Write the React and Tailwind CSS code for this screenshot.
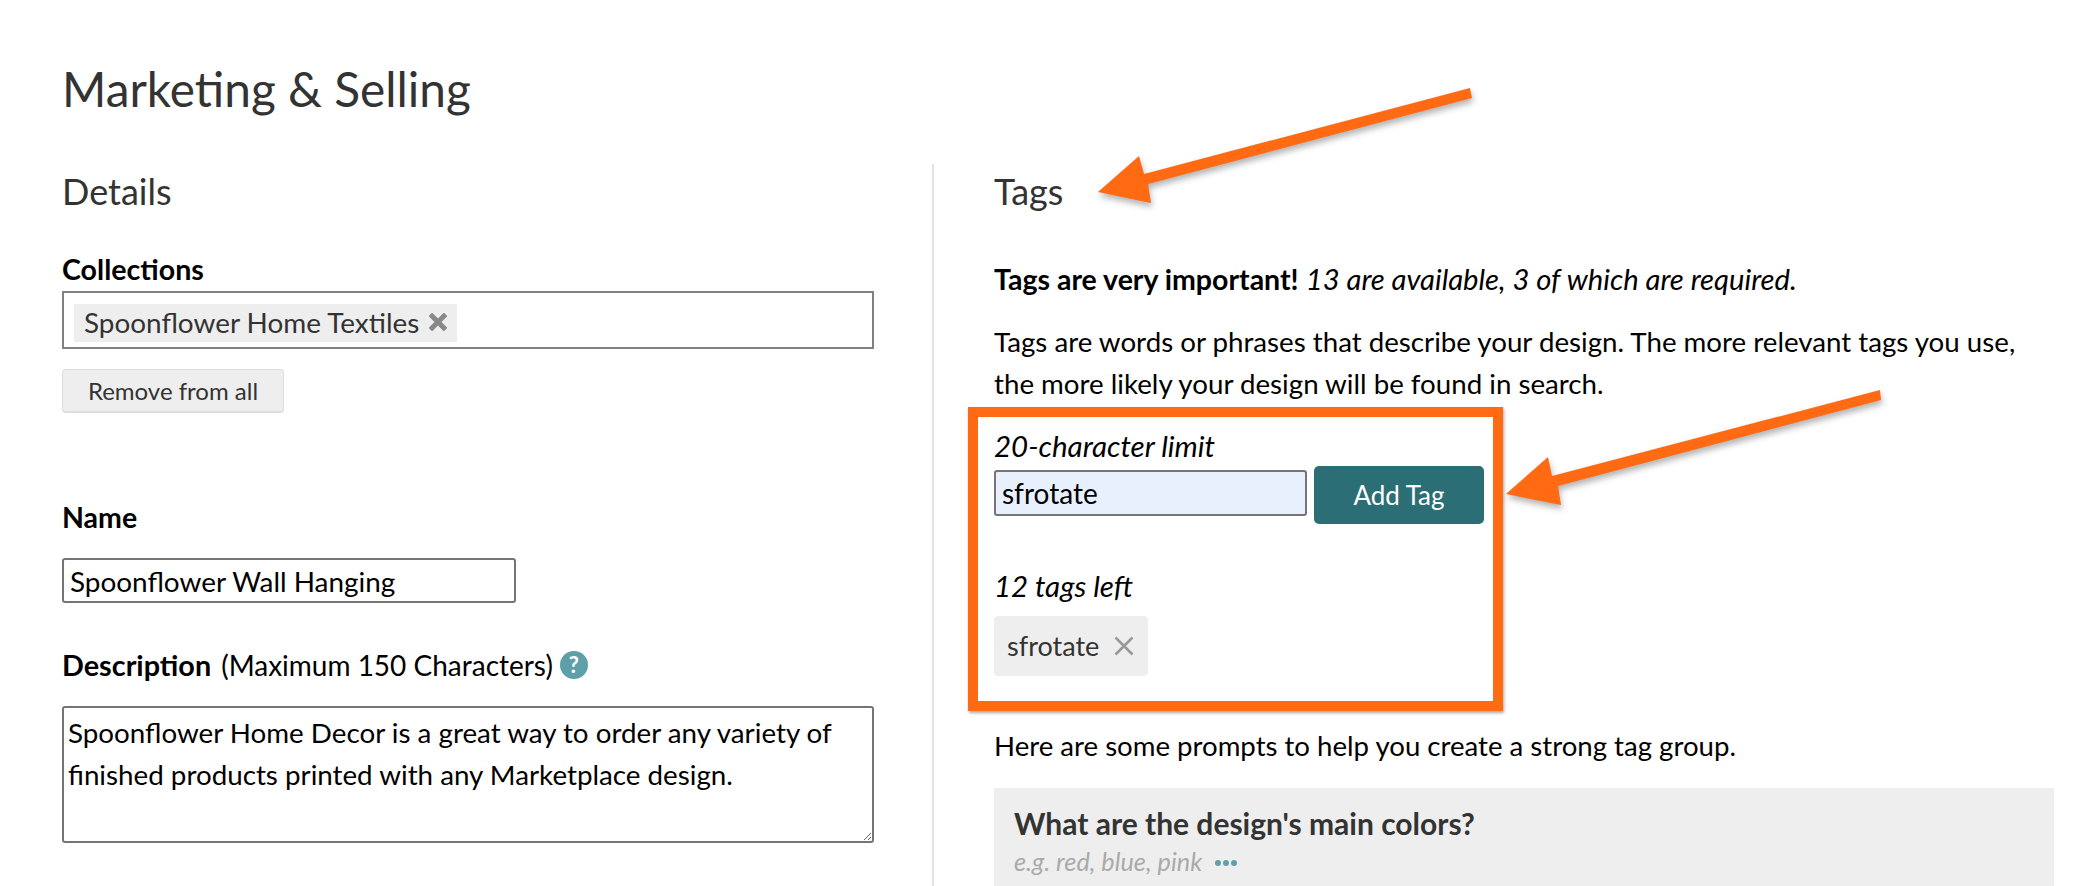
import React from "react";

function CloseIcon({ size, strokeWidth, className }) {
  return (
    <svg className={className} width={size} height={size} viewBox="0 0 20 20" fill="none" stroke="currentColor" strokeWidth={strokeWidth}>
      <path d="M1.5 1.5 18.5 18.5M18.5 1.5 1.5 18.5" />
    </svg>
  );
}

function Arrows() {
  return (
    <svg className="absolute left-0 top-0 pointer-events-none drop-shadow-[1px_4px_3px_rgba(0,0,0,0.3)]" width="2098" height="886">
      <polygon fill="#ff6a13" points="1470,88 1472,98 1148,184 1151,203 1098,192 1139,156 1144,174" />
      <polygon fill="#ff6a13" points="1880,390 1881,400 1558,486 1561,505 1506,494 1548,457 1552,476" />
    </svg>
  );
}

export default function App() {
  return (
    <div className="relative w-[2098px] h-[886px] overflow-hidden bg-white font-['Lato','Open_Sans',sans-serif] text-black text-[28px] leading-[42px]">
      <h1 className="pl-[62px] pt-[60px] h-[164px] text-[47.8px] leading-[58px] text-[#333333]">Marketing &amp; Selling</h1>

      <div className="flex h-[722px]">
        <div className="w-[934px] pl-[62px] pr-[58px] border-r-2 border-[#e3e3e3]">
          <h2 className="text-[36px] leading-[54px] text-[#333333]">Details</h2>
          <label className="block mt-[35px] font-bold leading-[32px] text-[28.6px]">Collections</label>
          <div className="mt-[6px] h-[58px] border-2 border-[#808080] p-[8px_10px]">
            <span className="inline-flex items-center h-[38px] pl-[10px] pr-[10px] pb-[2px] bg-[#eeeeee] text-[#333333] text-[27.9px] gap-[10px]">
              Spoonflower Home Textiles
              <CloseIcon size={18} strokeWidth={5.5} className="text-[#888888]" />
            </span>
          </div>
          <button className="block mt-[20px] h-[44px] w-[222px] rounded-[4px] bg-[#eeeeee] border border-[#dddddd] border-b-2 text-[24px] leading-[40px] text-[#333333]">Remove from all</button>

          <label className="block mt-[88px] font-bold leading-[32px] text-[28.5px]">Name</label>
          <input readOnly value="Spoonflower Wall Hanging" className="block mt-[25px] w-[454px] h-[45px] border-2 border-[#757575] rounded-[3px] px-[6px] text-[27.9px] outline-none" />

          <div className="mt-[42px] flex items-center h-[40px]">
            <span className="font-bold text-[28.8px]">Description</span>
            <span className="ml-[10px]">(Maximum 150 Characters)</span>
            <span className="ml-[7px] flex items-center justify-center w-[28px] h-[28px] rounded-full bg-[#5f9faa] text-white font-bold text-[22px]">?</span>
          </div>
          <textarea readOnly value="Spoonflower Home Decor is a great way to order any variety of finished products printed with any Marketplace design." className="block mt-[21px] w-full h-[137px] border-2 border-[#757575] rounded-[3px] px-[4px] pt-[4px] text-[27.75px] leading-[42px] outline-none resize-y" />
        </div>

        <div className="flex-1 pl-[60px] pr-[44px]">
          <h2 className="text-[36px] leading-[54px] text-[#333333]">Tags</h2>
          <p className="mt-[40px]"><b className="text-[28.5px]">Tags are very important!</b> <i className="text-[29.2px]">13 are available, 3 of which are required.</i></p>
          <p className="mt-[21px] text-[27.7px]">Tags are words or phrases that describe your design. The more relevant tags you use, the more likely your design will be found in search.</p>

          <div className="mt-[2px] ml-[-26px] w-[535px] h-[304px] border-[10px] border-[#ff6a13] shadow-[1px_2px_3px_rgba(0,0,0,0.35)] pl-[16px] pt-[8px]">
            <i className="block text-[29.5px]">20-character limit</i>
            <div className="flex items-start gap-[7px] mt-[-1px]">
              <input readOnly value="sfrotate" className="mt-[4px] w-[313px] h-[46px] bg-[#e8f0fe] border-2 border-[#757575] rounded-[3px] px-[6px] outline-none" />
              <button className="w-[170px] h-[58px] rounded-[5px] bg-[#2b6e75] text-white text-[26px]">Add Tag</button>
            </div>
            <i className="block mt-[41px] text-[29.5px]">12 tags left</i>
            <span className="mt-[9px] inline-flex items-center gap-[15px] h-[60px] pl-[13px] pr-[14px] rounded-[4px] bg-[#eeeeee] text-[#333333] text-[27px]">
              sfrotate
              <CloseIcon size={20} strokeWidth={2.6} className="text-[#999999]" />
            </span>
          </div>

          <p className="mt-[14px] text-[27.6px]">Here are some prompts to help you create a strong tag group.</p>
          <div className="mt-[21px] h-[98px] bg-[#eeeeee] px-[20px] pt-[14px]">
            <h3 className="font-bold text-[30px] leading-[42px] text-[#333333]">What are the design's main colors?</h3>
            <div className="flex items-center gap-[13px] italic text-[25.3px] leading-[34px] text-[#aaaaaa]">
              e.g. red, blue, pink
              <span className="flex gap-[2.5px] mt-[4px]">
                <span className="w-[5.5px] h-[5.5px] rounded-full bg-[#5f9faa]" />
                <span className="w-[5.5px] h-[5.5px] rounded-full bg-[#5f9faa]" />
                <span className="w-[5.5px] h-[5.5px] rounded-full bg-[#5f9faa]" />
              </span>
            </div>
          </div>
        </div>
      </div>
      <Arrows />
    </div>
  );
}
